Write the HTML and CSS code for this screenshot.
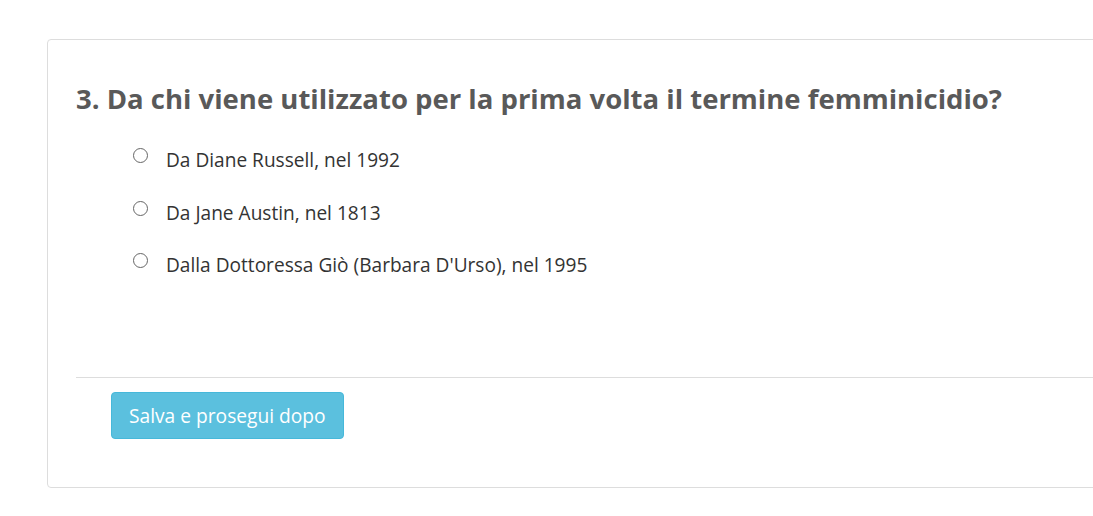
FILE: index.html
```html
<!DOCTYPE html>
<html lang="it">
<head>
<meta charset="utf-8">
<link rel="stylesheet" href="styles.css">
</head>
<body>
<div class="card">
  <h3 class="question">3. Da chi viene utilizzato per la prima volta il termine femminicidio?</h3>
  <ul class="options">
    <li class="option"><input type="radio" name="q3" class="radio"><span>Da Diane Russell, nel 1992</span></li>
    <li class="option"><input type="radio" name="q3" class="radio"><span>Da Jane Austin, nel 1813</span></li>
    <li class="option"><input type="radio" name="q3" class="radio"><span>Dalla Dottoressa Giò (Barbara D'Urso), nel 1995</span></li>
  </ul>
  <div class="footer">
    <button class="btn-save">Salva e prosegui dopo</button>
  </div>
</div>
</body>
</html>
```
FILE: styles.css
```css
html, body {
  margin: 0;
  padding: 0;
  background: #fff;
  overflow: hidden;
}
body {
  font-family: "Open Sans", "Liberation Sans", sans-serif;
  color: #333;
}
.card {
  margin: 39px 0 0 47px;
  width: 1100px;
  border: 1px solid #ddd;
  border-radius: 4px;
  padding: 0 0 0 28px;
  height: 449px;
  box-sizing: border-box;
  display: flex;
  flex-direction: column;
}
.question {
  margin: 39px 0 0 0;
  font-size: 27.5px;
  font-weight: 700;
  line-height: 40px;
  color: #595959;
}
.options {
  list-style: none;
  margin: 29px 0 0 0;
  padding: 0 0 0 57px;
  display: flex;
  flex-direction: column;
  gap: 28.5px;
}
.option {
  display: flex;
  align-items: center;
  font-size: 19.1px;
  line-height: 24px;
  color: #333;
}
.radio {
  appearance: none;
  -webkit-appearance: none;
  width: 15px;
  height: 15px;
  margin: -9px 18px 0 0;
  border: 1px solid #666;
  border-radius: 50%;
  background: #fff;
  flex: none;
}
.footer {
  margin-top: auto;
  margin-bottom: 48px;
  border-top: 1px solid #ddd;
  padding: 14px 0 0 35px;
}
.btn-save {
  font-family: "Open Sans", "Liberation Sans", sans-serif;
  font-size: 19.2px;
  color: #fff;
  background: #5bc0de;
  border: 1px solid #46b8da;
  border-radius: 4px;
  height: 47px;
  padding: 0 17px;
  cursor: pointer;
}
```
